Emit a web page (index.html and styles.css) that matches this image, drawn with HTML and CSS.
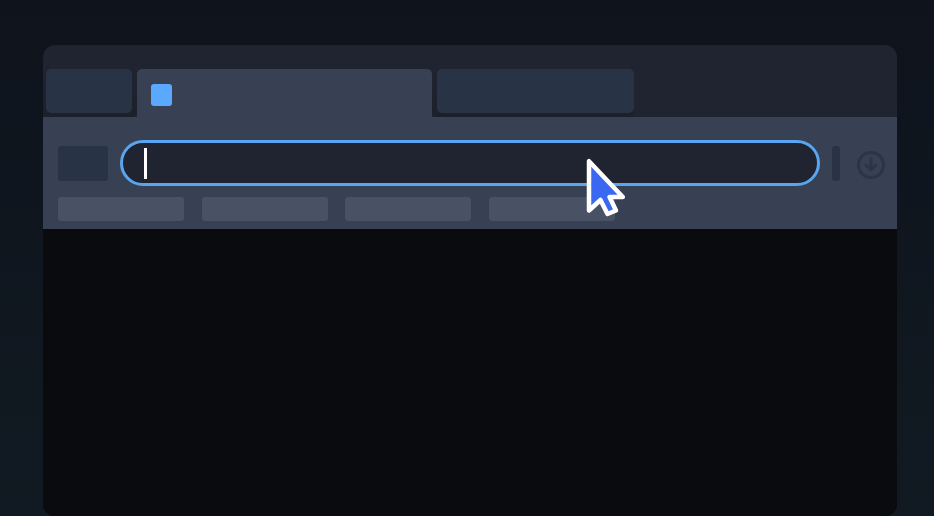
FILE: index.html
```html
<!DOCTYPE html>
<html lang="en">
<head>
<meta charset="utf-8">
<title>Browser</title>
<link rel="stylesheet" href="styles.css">
</head>
<body>
<main class="window">
  <div class="tabstrip">
    <div class="tab-wrap tab-wrap-first"><div class="tab"></div></div>
    <div class="tab-active"><span class="favicon"></span></div>
    <div class="tab-wrap tab-wrap-last"><div class="tab"></div></div>
  </div>
  <div class="toolbar">
    <div class="navrow">
      <div class="nav-button"></div>
      <div class="address"><span class="caret"></span></div>
      <div class="divider"></div>
      <svg class="download" width="30" height="30" viewBox="0 0 30 30" fill="none" stroke="#2b3547" stroke-width="3" stroke-linecap="round" stroke-linejoin="round" aria-hidden="true">
        <circle cx="15" cy="15" r="12.5"/>
        <path d="M15 8.5v11M10 15l5 5 5-5"/>
      </svg>
    </div>
    <div class="bookmarks">
      <div class="bookmark"></div>
      <div class="bookmark"></div>
      <div class="bookmark"></div>
      <div class="bookmark"></div>
    </div>
  </div>
  <div class="content"></div>
</main>
<svg class="pointer" width="44" height="64" viewBox="0 0 44 64" aria-hidden="true">
  <path d="M3 3.2V52.5L14.5 42L21.5 56L30 52.5L23.5 39H36.8Z" fill="#3b68f0" stroke="#fff" stroke-width="4.5" stroke-linejoin="round"/>
</svg>
</body>
</html>
```
FILE: styles.css
```css
html, body {
  margin: 0;
  height: 100%;
  overflow: hidden;
}
body {
  position: relative;
  box-sizing: border-box;
  padding: 45px 37px 0 43px;
  background: linear-gradient(180deg, #0e131c 0%, #111a22 100%);
}
.window {
  height: 471px;
  border-radius: 12px;
  overflow: hidden;
  display: flex;
  flex-direction: column;
  background: #090b0f;
}
.tabstrip {
  height: 72px;
  flex: none;
  display: flex;
  align-items: flex-end;
  background: #1f2430;
}
.tab-wrap {
  height: 48px;
  box-sizing: border-box;
}
.tab-wrap-first {
  width: 94px;
  padding: 0 5px 4px 3px;
  border-radius: 0 0 5px 0;
  background: linear-gradient(180deg, #1f2430 0, #1b202a 100%);
}
.tab-wrap-last {
  width: 202px;
  padding: 0 0 4px 5px;
  border-radius: 0 0 0 5px;
  background: linear-gradient(180deg, #1f2430 0, #1b202a 100%);
}
.tab {
  height: 100%;
  border-radius: 5px;
  background: #283445;
}
.tab-active {
  width: 295px;
  height: 48px;
  box-sizing: border-box;
  padding: 15px 0 0 14px;
  border-radius: 5px 5px 0 0;
  background: #384053;
}
.favicon {
  display: block;
  width: 21px;
  height: 22px;
  border-radius: 3px;
  background: #5ba9ff;
}
.toolbar {
  height: 112px;
  flex: none;
  box-sizing: border-box;
  padding: 23px 11px 0 15px;
  background: #384053;
}
.navrow {
  height: 46px;
  display: flex;
  align-items: center;
}
.nav-button {
  width: 50px;
  height: 35px;
  margin-top: 1px;
  border-radius: 3px;
  background: #283445;
}
.address {
  width: 700px;
  height: 46px;
  margin-left: 12px;
  box-sizing: border-box;
  padding: 5px 0 0 21px;
  border: 3px solid #5aa5ef;
  border-radius: 23px;
  background: #1f2430;
}
.caret {
  display: block;
  width: 2.5px;
  height: 31px;
  background: #fff;
}
.divider {
  width: 8px;
  height: 35px;
  margin-left: 12px;
  margin-top: 1px;
  border-radius: 3px;
  background: #283445;
}
.download {
  margin: 3px 0 0 16px;
  flex: none;
}
.bookmarks {
  display: flex;
  gap: 17.5px;
  margin-top: 11px;
}
.bookmark {
  width: 126px;
  height: 24px;
  border-radius: 3px;
  background: #495265;
}
.content {
  flex: 1;
  background: #090b0f;
}
.pointer {
  position: absolute;
  left: 586px;
  top: 158px;
}
```
